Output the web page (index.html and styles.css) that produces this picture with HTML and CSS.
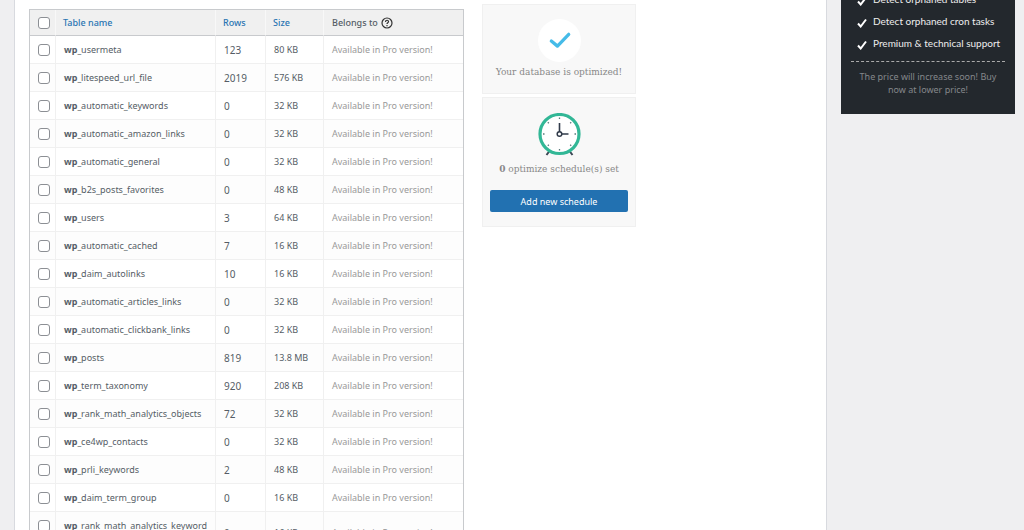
FILE: index.html
```
<!DOCTYPE html>
<html lang="en">
<head>
    <meta charset="UTF-8">
    <meta name="viewport" content="width=device-width, initial-scale=1.0">
    <title>Database tables</title>
    <link rel="stylesheet" href="styles.css">
</head>
<body>
    <div class="page">
        <main class="panel">
            <table class="tables-list">
                <colgroup>
                    <col class="col-check">
                    <col class="col-name">
                    <col class="col-rows">
                    <col class="col-size">
                    <col class="col-belongs">
                </colgroup>
                <thead>
                    <tr>
                        <th><input type="checkbox" aria-label="Select all"></th>
                        <th><a href="#">Table name</a></th>
                        <th><a href="#">Rows</a></th>
                        <th><a href="#">Size</a></th>
                        <th>
                            <span class="belongs">Belongs to
                                <svg class="help" viewBox="0 0 12 12">
                                    <circle cx="6" cy="6" r="5"/>
                                    <path d="M4.5 4.9C4.5 2.7 7.6 2.8 7.5 4.7C7.4 5.8 6 5.7 6 7M6 8.1V9.2"/>
                                </svg>
                            </span>
                        </th>
                    </tr>
                </thead>
                <tbody id="rows"></tbody>
            </table>

            <div class="widgets">
                <section class="card card-status">
                    <svg class="card-icon" viewBox="0 0 42 42">
                        <circle cx="21" cy="21" r="21" fill="#fff"/>
                        <path d="M13 21.500L19 26.500L30 15" fill="none" stroke="#45bbe8" stroke-width="3.200" stroke-linecap="round" stroke-linejoin="round"/>
                    </svg>
                    <p>Your database is optimized!</p>
                </section>
                <section class="card card-schedule">
                    <svg class="card-icon" viewBox="0 0 42 43">
                        <path d="M11 38L8 42M31 38L34 42" stroke="#3c4654" stroke-width="2"/>
                        <circle cx="21" cy="21" r="19.500" fill="#fff" stroke="#32b796" stroke-width="3.200"/>
                        <path d="M21 4.500V6M21 36V37.500M4.500 21H6M36 21H37.500M9.300 9.300L10.300 10.300M31.700 31.700L32.700 32.700M32.700 9.300L31.700 10.300M10.300 31.700L9.300 32.700" stroke="#5b7a7c" stroke-width="1.300"/>
                        <path d="M21 10V19M23 21H30" stroke="#313b4a" stroke-width="1.600"/>
                        <circle cx="21" cy="21" r="2.300" fill="#fff" stroke="#313b4a" stroke-width="1.500"/>
                    </svg>
                    <p><b>0</b> optimize schedule(s) set</p>
                    <button type="button" class="btn">Add new schedule</button>
                </section>
            </div>
        </main>

        <aside class="promo">
            <ul>
                <li><svg viewBox="0 0 10 10"><path d="M1 5.500L3.700 8.500L9 1.500"/></svg>Detect orphaned tables</li>
                <li><svg viewBox="0 0 10 10"><path d="M1 5.500L3.700 8.500L9 1.500"/></svg>Detect orphaned cron tasks</li>
                <li><svg viewBox="0 0 10 10"><path d="M1 5.500L3.700 8.500L9 1.500"/></svg>Premium &amp; technical support</li>
            </ul>
            <p>The price will increase soon! Buy now at lower price!</p>
        </aside>
    </div>

    <script src="tables.js"></script>
</body>
</html>
```
FILE: styles.css
```
* {
    box-sizing: border-box;
}

body {
    margin: 0;
    height: 100vh;
    overflow: hidden;
    background: #efeff1;
    color: #555d66;
    font-family: "Noto Sans", "Open Sans", sans-serif;
    font-size: 9px;
}

p {
    margin: 0;
}

.page {
    display: flex;
    align-items: flex-start;
    gap: 14px;
    padding: 0 9px 0 14px;
}

.panel {
    flex: 1;
    display: flex;
    align-items: flex-start;
    gap: 18px;
    min-height: 100vh;
    padding: 0 14px;
    background: #fff;
    border: solid #d8dadf;
    border-width: 0 1px;
}

/* tables list */
.tables-list {
    width: 435px;
    margin-top: 9px;
    table-layout: fixed;
    border-collapse: separate;
    border-spacing: 0;
    border: 1px solid #c8cacd;
}

.col-check {
    width: 26px;
}

.col-name {
    width: 160px;
}

.col-rows {
    width: 50px;
}

.col-size {
    width: 58px;
}

.tables-list th,
.tables-list td {
    height: 28px;
    padding: 0 6px 0 8px;
    border-right: 1px solid #f0f0f0;
    border-bottom: 1px solid #f0f0f0;
    text-align: left;
    line-height: 14px;
}

.tables-list th {
    height: 26px;
    padding: 0 7px;
    background: #f0f0f0;
    border-right-color: #f8f8f8;
    border-bottom-color: #c8cacd;
    font-weight: 500;
}

.tables-list th:last-child,
.tables-list td:last-child {
    padding: 0 8px;
    border-right: 0;
}

.tables-list th:first-child,
.tables-list td:first-child {
    padding: 0 0 0 8px;
}

.tables-list td:first-child {
    padding-top: 8px;
    vertical-align: top;
}

.tables-list tbody tr:nth-child(even) {
    background: #fdfdfd;
}

.tables-list tr.tall td {
    height: 42px;
}

.tables-list a {
    color: #2a75b3;
    text-decoration: none;
}

.tables-list input {
    display: block;
    width: 12px;
    height: 12px;
    margin: 0;
    appearance: none;
    background: #fff;
    border: 1px solid #8c8f94;
    border-radius: 3px;
}

.name {
    word-break: break-all;
}

.tables-list .count {
    font-size: 10px;
}

.tables-list .pro {
    color: #999;
}

.belongs {
    display: flex;
    align-items: center;
    gap: 3px;
}

.help {
    width: 12px;
    height: 12px;
    fill: none;
    stroke: #333;
    stroke-width: 1.2;
}

/* widgets */
.widgets {
    display: flex;
    flex-direction: column;
    gap: 3px;
    width: 154px;
    margin-top: 4px;
}

.card {
    display: flex;
    flex-direction: column;
    align-items: center;
    padding: 14px 7px;
    background: #f8f8f8;
    border: 1px solid #f0f0f0;
    color: #888;
    font-family: "DejaVu Serif Condensed", "DejaVu Serif", serif;
    font-size: 10px;
    line-height: 14px;
}

.card-schedule {
    padding-top: 15px;
}

.card-icon {
    width: 43px;
    height: 43px;
}

.card p {
    margin-top: 3px;
    white-space: nowrap;
}

.card-schedule p {
    margin-top: 6px;
}

.btn {
    width: 100%;
    height: 22px;
    margin-top: 14px;
    padding: 0;
    background: #2271b1;
    border: 0;
    border-radius: 2px;
    color: #fff;
    font-family: "Noto Sans", "Open Sans", sans-serif;
    font-size: 9px;
}

/* promo box */
.promo {
    width: 174px;
    padding: 0 10px 18px;
    background: #23282d;
    color: #eee;
}

.promo ul {
    margin: -12px 0 7px;
    padding: 0 0 0 6px;
    list-style: none;
}

.promo li {
    display: flex;
    align-items: center;
    gap: 6px;
    font-family: Lato, "Open Sans", sans-serif;
    font-size: 10px;
    line-height: 22px;
    white-space: nowrap;
}

.promo svg {
    flex: none;
    width: 10px;
    height: 10px;
    margin-top: 4px;
    fill: none;
    stroke: #fff;
    stroke-width: 2;
}

.promo p {
    padding: 8px 6px 0;
    border-top: 1px dashed #aaa;
    color: #83878b;
    line-height: 13px;
    text-align: center;
}
```
FILE: tables.js
```
const tables = [
    ["usermeta", 123, "80 KB"],
    ["litespeed_url_file", 2019, "576 KB"],
    ["automatic_keywords", 0, "32 KB"],
    ["automatic_amazon_links", 0, "32 KB"],
    ["automatic_general", 0, "32 KB"],
    ["b2s_posts_favorites", 0, "48 KB"],
    ["users", 3, "64 KB"],
    ["automatic_cached", 7, "16 KB"],
    ["daim_autolinks", 10, "16 KB"],
    ["automatic_articles_links", 0, "32 KB"],
    ["automatic_clickbank_links", 0, "32 KB"],
    ["posts", 819, "13.8 MB"],
    ["term_taxonomy", 920, "208 KB"],
    ["rank_math_analytics_objects", 72, "32 KB"],
    ["ce4wp_contacts", 0, "32 KB"],
    ["prli_keywords", 2, "48 KB"],
    ["daim_term_group", 0, "16 KB"],
    ["rank_math_analytics_keyword_manager", 0, "16 KB"]
];

// long names take two lines
document.getElementById("rows").innerHTML = tables.map(([name, rows, size]) => `
    <tr class="${name.length > 30 ? "tall" : ""}">
        <td><input type="checkbox" aria-label="wp_${name}"></td>
        <td class="name"><b>wp_</b>${name}</td>
        <td class="count">${rows}</td>
        <td class="size">${size}</td>
        <td class="pro">Available in Pro version!</td>
    </tr>`).join("");
```
